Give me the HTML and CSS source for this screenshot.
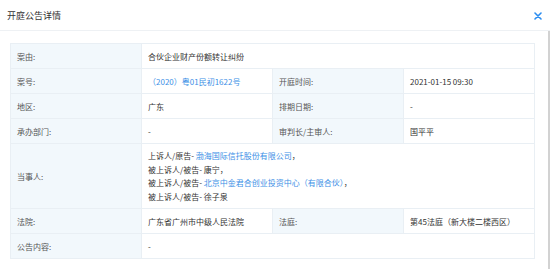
FILE: index.html
```html
<!DOCTYPE html>
<html lang="zh-CN">
<head>
    <meta charset="UTF-8">
    <meta name="viewport" content="width=device-width, initial-scale=1.0">
    <title>开庭公告详情</title>
    <link rel="stylesheet" href="styles.css">
</head>
<body>
    <div class="modal-header">
        <span class="modal-title">开庭公告详情</span>
        <span class="modal-close">
            <svg width="8" height="8" viewBox="0 0 8 8"><path d="M1 1L7 7M7 1L1 7" stroke="#2b8df0" stroke-width="1.6" stroke-linecap="round"/></svg>
        </span>
    </div>
    <div class="modal-body">
        <div class="modal-content">
            <table class="detail-table">
                <colgroup>
                    <col class="col-label"><col class="col-value"><col class="col-label"><col class="col-value">
                </colgroup>
                <tr>
                    <td class="label">案由:</td>
                    <td colspan="3">合伙企业财产份额转让纠纷</td>
                </tr>
                <tr>
                    <td class="label">案号:</td>
                    <td><a class="link">（2020）粤01民初1622号</a></td>
                    <td class="label">开庭时间:</td>
                    <td>2021-01-15 09:30</td>
                </tr>
                <tr>
                    <td class="label">地区:</td>
                    <td>广东</td>
                    <td class="label">排期日期:</td>
                    <td>-</td>
                </tr>
                <tr>
                    <td class="label">承办部门:</td>
                    <td>-</td>
                    <td class="label">审判长/主审人:</td>
                    <td>国平平</td>
                </tr>
                <tr>
                    <td class="label">当事人:</td>
                    <td colspan="3" class="multi">
                        上诉人/原告- <a class="link">渤海国际信托股份有限公司</a>，<br>
                        被上诉人/被告- 康宁，<br>
                        被上诉人/被告- <a class="link">北京中金君合创业投资中心（有限合伙）</a>，<br>
                        被上诉人/被告- 徐子泉
                    </td>
                </tr>
                <tr>
                    <td class="label">法院:</td>
                    <td>广东省广州市中级人民法院</td>
                    <td class="label">法庭:</td>
                    <td>第45法庭（新大楼二楼西区）</td>
                </tr>
                <tr>
                    <td class="label">公告内容:</td>
                    <td colspan="3">-</td>
                </tr>
            </table>
        </div>
        <div class="scrollbar"></div>
    </div>
</body>
</html>
```

FILE: styles.css
```css
body {
    margin: 0;
    font-family: "Noto Sans CJK SC", "Noto Sans", sans-serif;
    background: #fff;
    color: #333;
    overflow: hidden;
}
.modal-header {
    display: flex;
    align-items: center;
    justify-content: space-between;
    height: 31px;
    padding: 0 8px 0 7px;
    border-bottom: 1px solid #eef1f4;
    box-sizing: border-box;
}
.modal-title {
    font-size: 9px;
    color: #333;
}
.modal-close {
    display: flex;
    margin-top: 1px;
}
.modal-body {
    display: flex;
    height: 238px;
}
.modal-content {
    flex: 1;
    padding: 12px 12px 0 10px;
}
.scrollbar {
    width: 0;
    border-left: 2px solid #d2d2d2;
}
.detail-table {
    width: 525px;
    border-collapse: collapse;
    table-layout: fixed;
    font-size: 8px;
    border: 1px solid #e9eff4;
}
.col-label, .col-value {
    width: 25%;
}
.detail-table td {
    height: 24px;
    padding: 0 6px;
    border: 1px solid #e9eff4;
    vertical-align: middle;
    color: #333;
    white-space: nowrap;
}
.detail-table td.label {
    background: #f2f8fc;
    color: #555;
}
.detail-table td.multi {
    height: auto;
    padding: 5px 6px;
    line-height: 13.5px;
}
.link {
    color: #3c8fe6;
    text-decoration: none;
}
```
